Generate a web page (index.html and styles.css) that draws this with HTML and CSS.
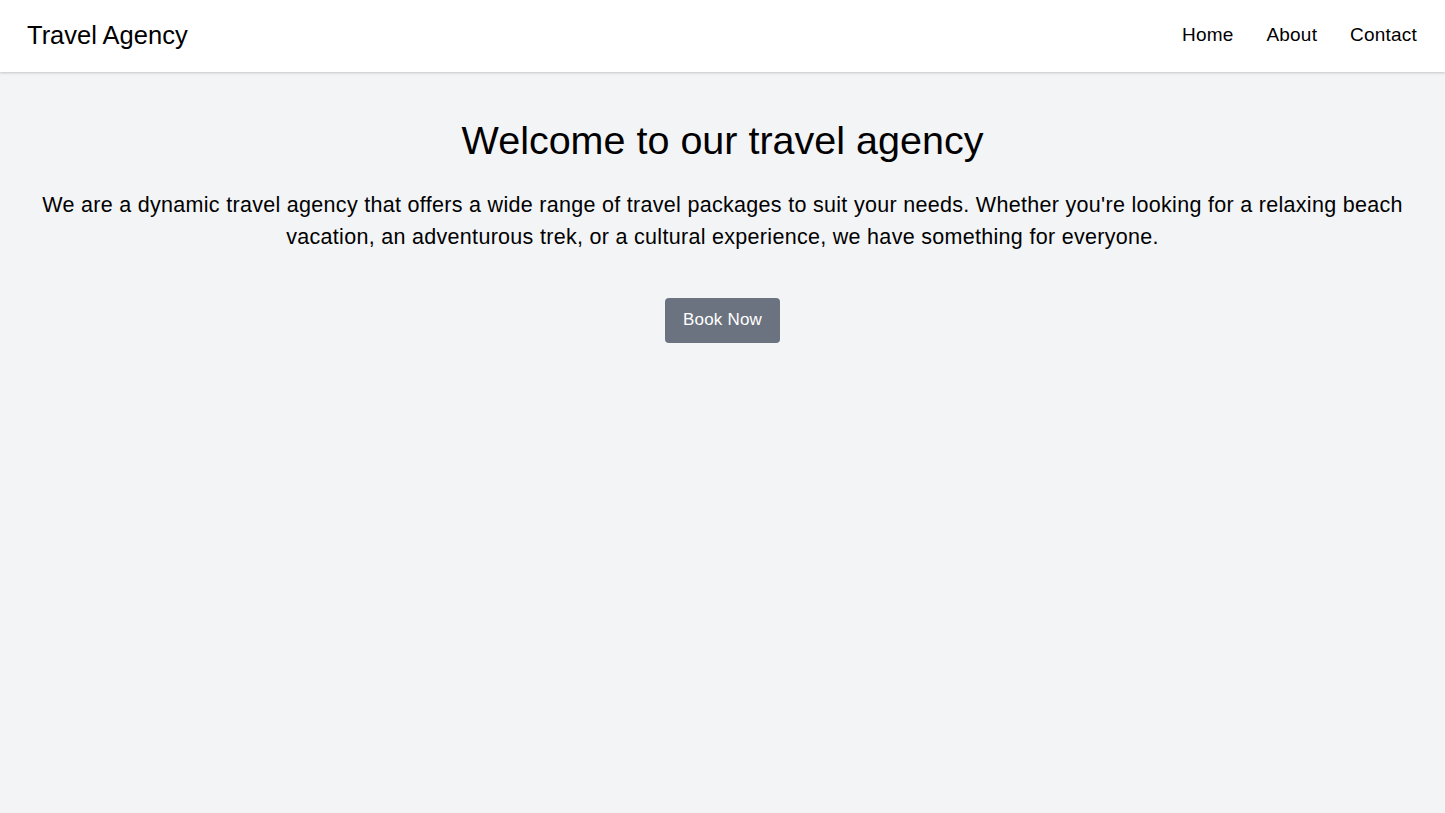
FILE: index.html
```html
<!DOCTYPE html>
<html lang="en">
<head>
<meta charset="utf-8">
<title>Travel Agency</title>
<link rel="stylesheet" href="styles.css">
</head>
<body>
<header class="site-header">
  <div class="logo">Travel Agency</div>
  <nav class="nav">
    <a href="#" class="nav-link">Home</a>
    <a href="#" class="nav-link">About</a>
    <a href="#" class="nav-link">Contact</a>
  </nav>
</header>
<main class="hero">
  <h1 class="hero-title">Welcome to our travel agency</h1>
  <p class="hero-text">We are a dynamic travel agency that offers a wide range of travel packages to suit your needs. Whether you're looking for a relaxing beach vacation, an adventurous trek, or a cultural experience, we have something for everyone.</p>
  <a href="#" class="btn">Book Now</a>
</main>
</body>
</html>
```

FILE: styles.css
```css
* { box-sizing: border-box; }
html, body { margin: 0; padding: 0; }
body {
  background: #f3f4f6;
  font-family: "Liberation Sans", Arial, sans-serif;
  color: #000;
  min-height: 100vh;
}
.site-header {
  background: #fff;
  height: 72px;
  padding: 0 28px 2px 27px;
  display: flex;
  align-items: center;
  justify-content: space-between;
  box-shadow: 0 1px 3px rgba(0,0,0,0.12), 0 1px 2px rgba(0,0,0,0.08);
}
.logo {
  font-size: 25.5px;
  line-height: 32px;
}
.nav {
  display: flex;
  gap: 33px;
}
.nav-link {
  color: #000;
  text-decoration: none;
  font-size: 19px;
  line-height: 28px;
  letter-spacing: 0.2px;
}
.hero {
  padding: 44px 32px 0;
  display: flex;
  flex-direction: column;
  align-items: center;
  text-align: center;
}
.hero-title {
  margin: 0;
  font-weight: 400;
  font-size: 39.5px;
  line-height: 48px;
}
.hero-text {
  margin: 25px 0 0;
  font-size: 21.5px;
  line-height: 32px;
  letter-spacing: 0.3px;
}
.btn {
  margin-top: 45px;
  display: inline-block;
  background: #6b7280;
  color: #fff;
  text-decoration: none;
  font-size: 17px;
  line-height: 24px;
  padding: 10px 18px 11px;
  border-radius: 4px;
  letter-spacing: 0.2px;
}
```
